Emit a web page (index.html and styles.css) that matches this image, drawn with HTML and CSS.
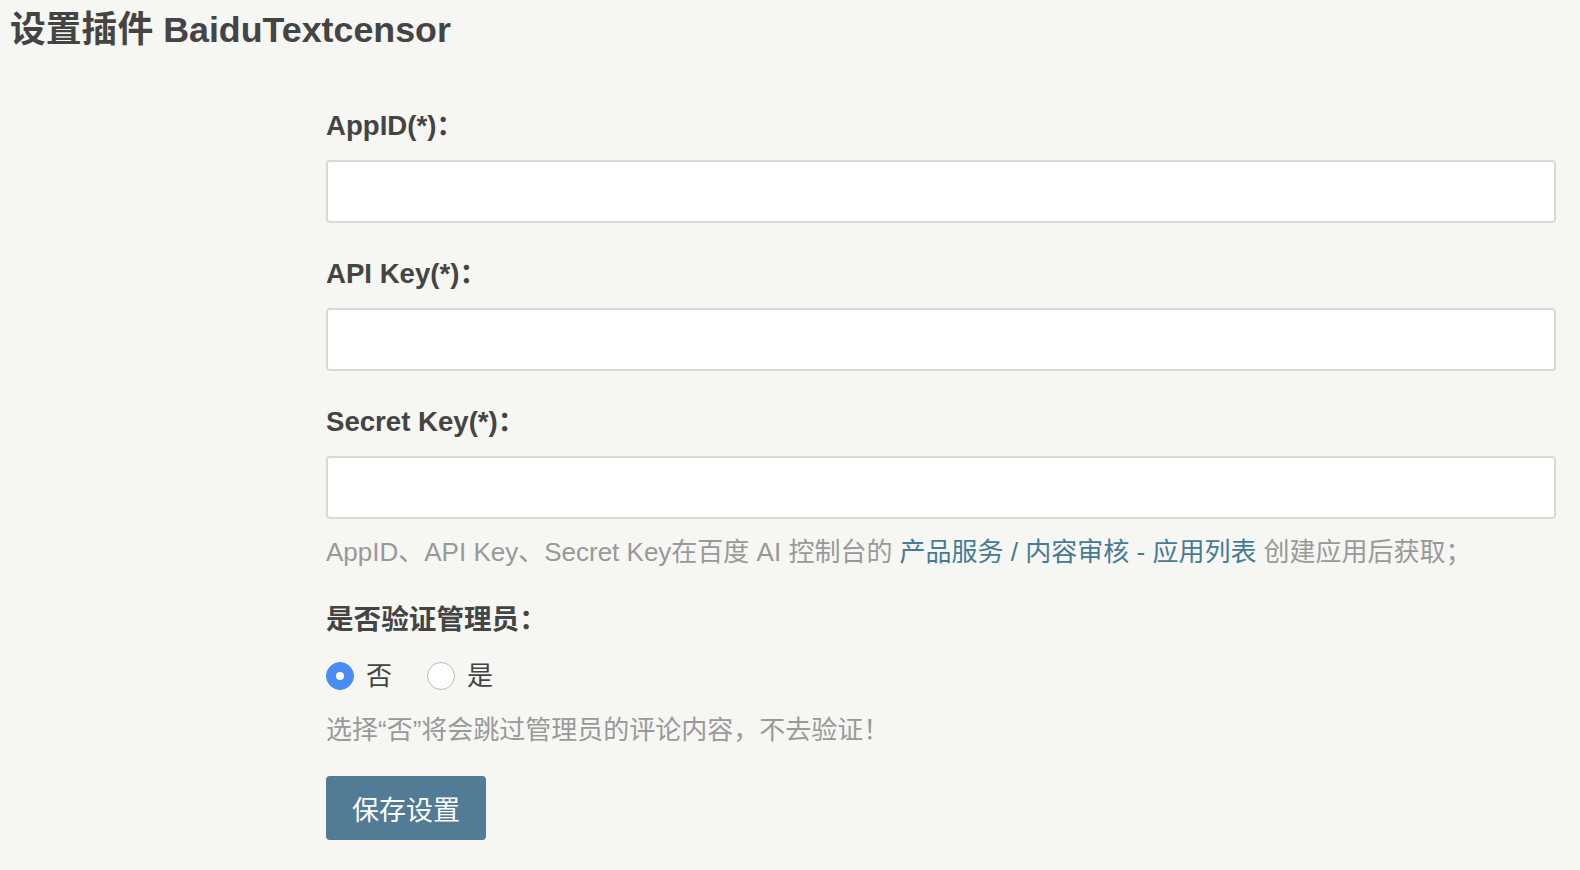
FILE: index.html
```html
<!DOCTYPE html>
<html lang="zh-CN">
<head>
<meta charset="utf-8">
<title>设置插件 BaiduTextcensor</title>
<link rel="stylesheet" href="styles.css">
</head>
<body>
<h2 class="page-title">设置插件 BaiduTextcensor</h2>
<form class="config-form">
  <div class="field">
    <label class="field-label" for="appid">AppID(*)：</label>
    <input class="text-input" id="appid" type="text">
  </div>
  <div class="field">
    <label class="field-label" for="apikey">API Key(*)：</label>
    <input class="text-input" id="apikey" type="text">
  </div>
  <div class="field field-last">
    <label class="field-label" for="secret">Secret Key(*)：</label>
    <input class="text-input" id="secret" type="text">
    <p class="description">AppID、API Key、Secret Key在百度 AI 控制台的 <a class="link" href="#">产品服务 / 内容审核 - 应用列表</a> 创建应用后获取；</p>
  </div>
  <div class="field-radio">
    <div class="field-label">是否验证管理员：</div>
    <div class="radio-row">
      <label class="radio-item"><input class="radio" type="radio" name="admin" checked><span>否</span></label>
      <label class="radio-item"><input class="radio" type="radio" name="admin"><span>是</span></label>
    </div>
    <p class="description">选择“否”将会跳过管理员的评论内容，不去验证！</p>
  </div>
  <div class="submit-row">
    <button class="btn-primary" type="button">保存设置</button>
  </div>
</form>
</body>
</html>
```

FILE: styles.css
```css
* { box-sizing: border-box; }
html, body {
  margin: 0;
  padding: 0;
  background: #f6f6f3;
  color: #444;
  font-family: "Liberation Sans", "Noto Sans CJK SC", sans-serif;
}
.page-title {
  margin: 10px 0 0 10px;
  font-size: 35.8px;
  line-height: 40px;
  font-weight: bold;
  color: #444;
}
.config-form {
  margin: 56px 24px 0 326px;
  display: flex;
  flex-direction: column;
}
.field {
  display: flex;
  flex-direction: column;
  margin-bottom: 31px;
}
.field-last { margin-bottom: 0; }
.field-label {
  display: block;
  font-size: 27.6px;
  line-height: 40px;
  font-weight: bold;
  color: #444;
  margin-bottom: 14px;
}
.text-input {
  width: 100%;
  height: 63px;
  border: 2px solid #d9d9d6;
  border-radius: 4px;
  background: #fff;
  font-size: 22px;
  padding: 0 12px;
  outline: none;
}
.description {
  margin: 17px 0 0 0;
  font-size: 26px;
  line-height: 32px;
  color: #999;
}
.link {
  color: #467b96;
  text-decoration: none;
}
.field-radio {
  margin-top: 32px;
  display: flex;
  flex-direction: column;
}
.field-radio .field-label { margin-bottom: 18px; }
.radio-row {
  display: flex;
  align-items: center;
  height: 36px;
  gap: 35px;
}
.radio-item {
  display: flex;
  align-items: center;
  gap: 12px;
  font-size: 26px;
  color: #444;
  line-height: 36px;
}
.radio {
  -webkit-appearance: none;
  appearance: none;
  margin: 0;
  width: 28px;
  height: 28px;
  border-radius: 50%;
  border: 1px solid #b9b9b9;
  background: #fff;
  position: relative;
}
.radio:checked {
  background: #4a8cf6;
  border-color: #4a8cf6;
}
.radio:checked::after {
  content: "";
  position: absolute;
  left: 50%;
  top: 50%;
  width: 8px;
  height: 8px;
  margin: -4px 0 0 -4px;
  border-radius: 50%;
  background: #fff;
}
.field-radio .description { margin-top: 20px; }
.submit-row { margin-top: 30px; }
.btn-primary {
  width: 160px;
  height: 64px;
  border: 0;
  border-radius: 4px;
  background: #527b95;
  color: #fff;
  font-size: 27px;
  font-family: "Liberation Sans", "Noto Sans CJK SC", sans-serif;
  padding: 0;
}
```
